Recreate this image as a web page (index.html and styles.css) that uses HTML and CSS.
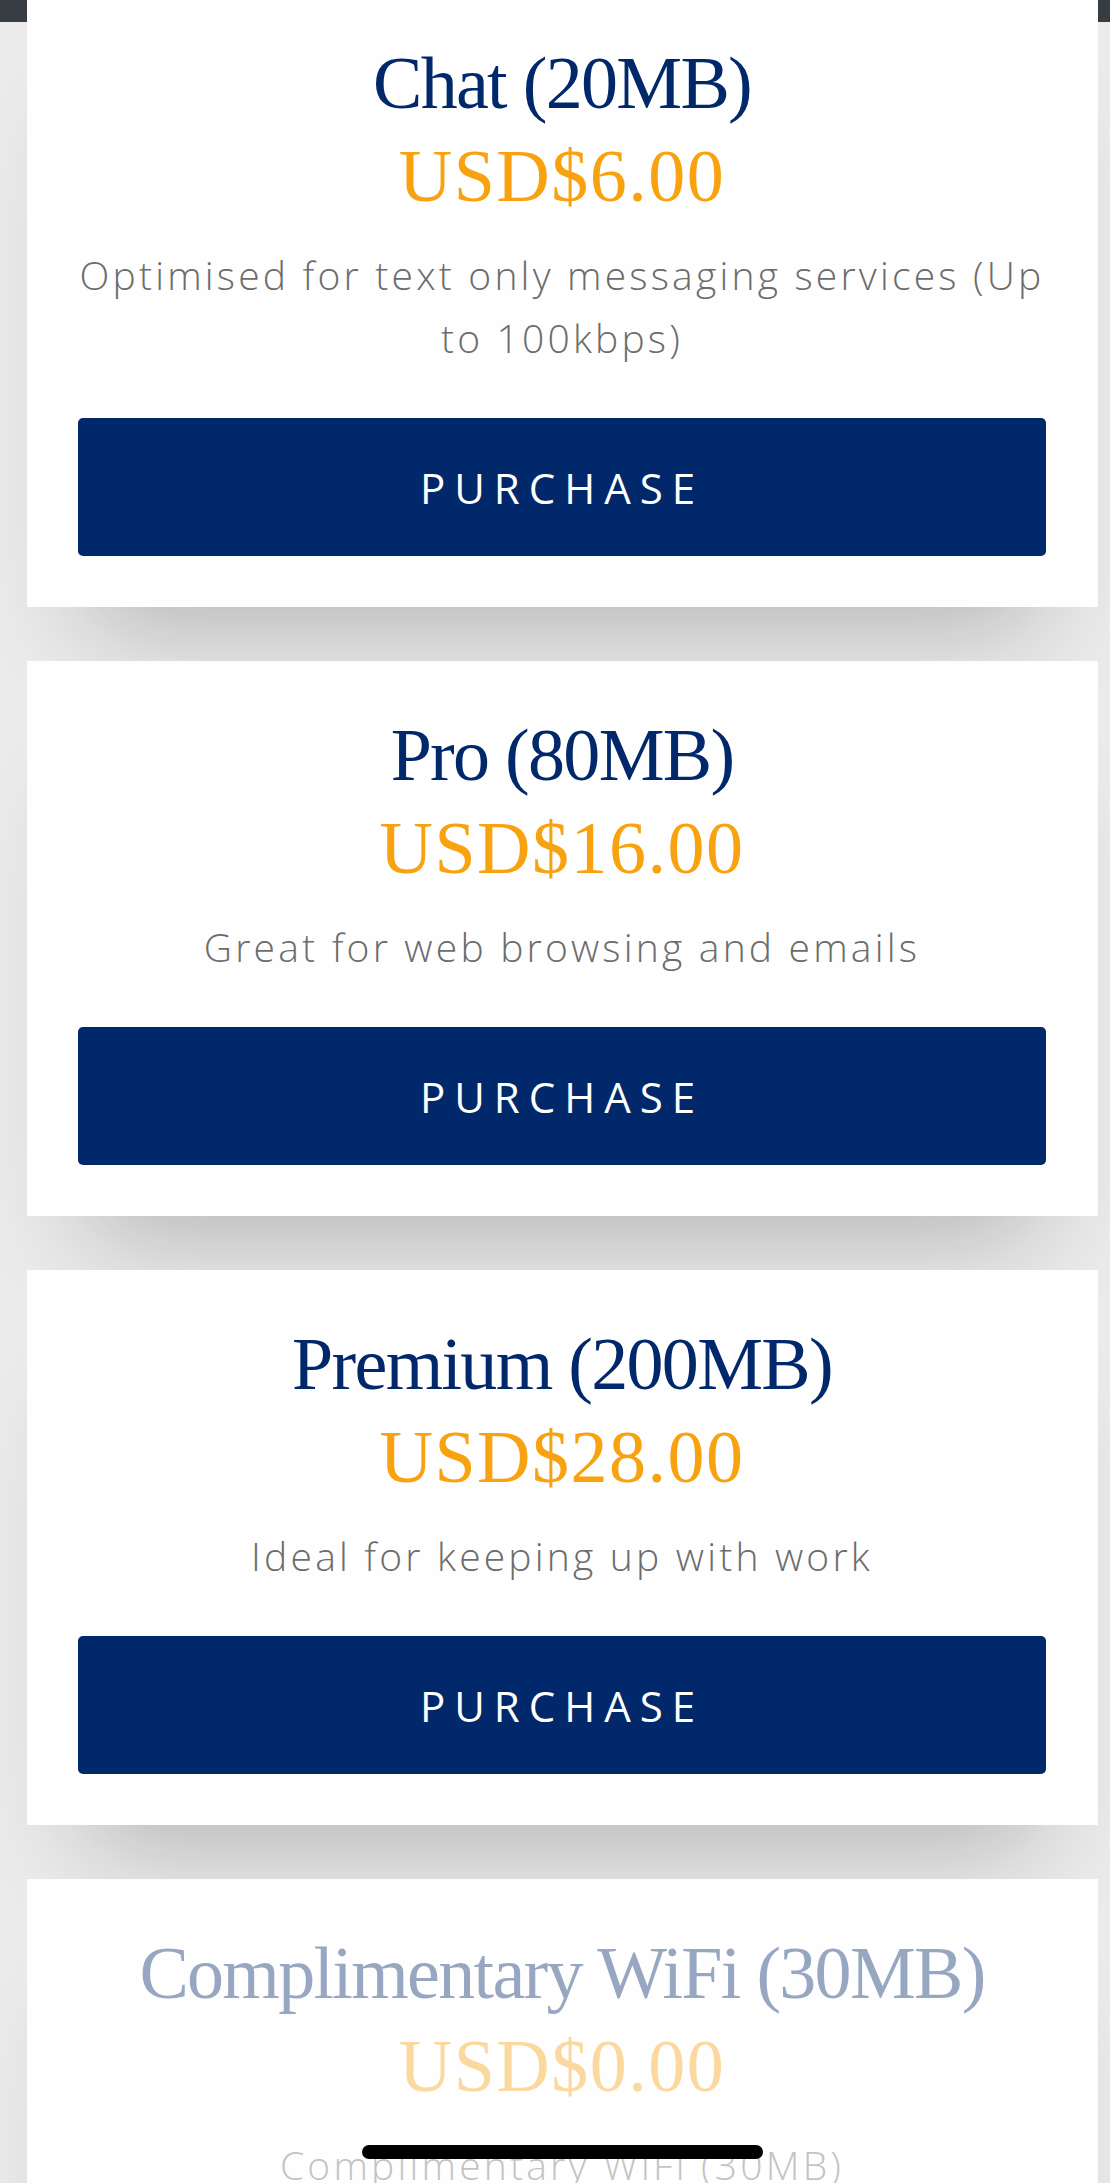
FILE: index.html
```html
<!DOCTYPE html>
<html lang="en">
<head>
<meta charset="utf-8">
<title>WiFi Plans</title>
<link rel="stylesheet" href="styles.css">
</head>
<body>
<div class="topbar"></div>
<main class="plans">
  <section class="card">
    <h2 class="plan-name">Chat (20MB)</h2>
    <div class="plan-price">USD$6.00</div>
    <p class="plan-desc">Optimised for text only messaging services (Up<br>to 100kbps)</p>
    <button class="purchase">PURCHASE</button>
  </section>
  <section class="card">
    <h2 class="plan-name">Pro (80MB)</h2>
    <div class="plan-price">USD$16.00</div>
    <p class="plan-desc">Great for web browsing and emails</p>
    <button class="purchase">PURCHASE</button>
  </section>
  <section class="card">
    <h2 class="plan-name">Premium (200MB)</h2>
    <div class="plan-price">USD$28.00</div>
    <p class="plan-desc">Ideal for keeping up with work</p>
    <button class="purchase">PURCHASE</button>
  </section>
  <section class="card card-disabled">
    <div class="card-body">
      <h2 class="plan-name">Complimentary WiFi (30MB)</h2>
      <div class="plan-price">USD$0.00</div>
      <p class="plan-desc">Complimentary WiFi (30MB)</p>
      <button class="purchase">PURCHASE</button>
    </div>
  </section>
</main>
<div class="home-indicator"></div>
</body>
</html>
```

FILE: styles.css
```css
html, body {
  margin: 0;
  padding: 0;
}
body {
  background: #ebebeb;
  overflow: hidden;
  height: 2183px;
}
.topbar {
  height: 22px;
  background: #363c42;
}
.plans {
  margin: -33px 12px 0 27px;
  display: flex;
  flex-direction: column;
  gap: 54px;
}
.card {
  background: #fefefe;
  padding: 48px 52px 51px 51px;
  text-align: center;
  box-shadow: 0 80px 100px -60px rgba(0, 0, 0, 0.24);
}
.plan-name {
  margin: 0;
  font-family: "Liberation Serif", serif;
  font-weight: normal;
  font-size: 74px;
  line-height: 93px;
  letter-spacing: -1.7px;
  color: #00286b;
}
.plan-price {
  font-family: "Liberation Serif", serif;
  font-size: 74px;
  line-height: 93px;
  letter-spacing: 1.5px;
  color: #f7a20e;
}
.plan-desc {
  margin: 20px -30px 0;
  font-family: "Open Sans", sans-serif;
  font-weight: 300;
  font-size: 39px;
  line-height: 63px;
  letter-spacing: 3.2px;
  color: #6c6c6c;
}
.purchase {
  display: flex;
  align-items: center;
  justify-content: center;
  width: 100%;
  height: 138px;
  margin-top: 49px;
  border: 0;
  border-radius: 5px;
  background: #00286a;
  color: #ffffff;
  font-family: "Open Sans", sans-serif;
  font-size: 42px;
  letter-spacing: 9px;
  padding: 0;
}
.card-disabled .card-body {
  opacity: 0.4;
}
.home-indicator {
  position: fixed;
  left: 362px;
  top: 2145px;
  width: 401px;
  height: 14px;
  border-radius: 7px;
  background: #000000;
}
```
